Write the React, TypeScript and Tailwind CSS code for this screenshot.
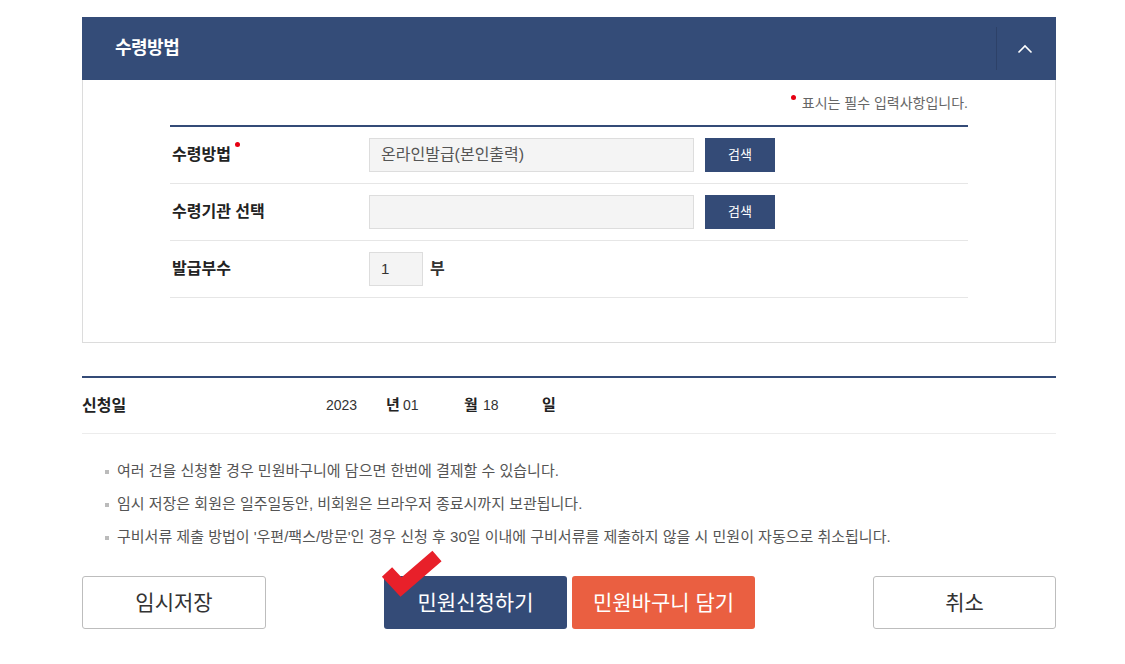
import React from 'react';

const font = { fontFamily: '"Liberation Sans", "Noto Sans CJK KR", sans-serif' };

const FieldRow = ({ label, required, children }: { label: string; required?: boolean; children: React.ReactNode }) => (
  <div className="flex h-[57px] items-center border-b border-[#e6e6e6]">
    <div className="relative w-[199px] pl-[2px] text-[16px] font-bold text-[#222]">
      <span className="relative">
        {label}
        {required && <span className="absolute -right-[9px] top-[-4px] h-[5px] w-[5px] rounded-full bg-[#e60012]" />}
      </span>
    </div>
    <div className="flex items-center">{children}</div>
  </div>
);

const SearchButton = () => (
  <button className="ml-[11px] h-[34px] w-[70px] bg-[#344b77] text-[13px] text-white">검색</button>
);

export default function App() {
  return (
    <div className="min-h-screen bg-white pt-[17px]" style={font}>
      <div className="ml-[82px] w-[974px]">
        {/* 수령방법 패널 */}
        <div className="flex h-[63px] items-center bg-[#344c78]">
          <h2 className="flex-1 pl-[33px] text-[18px] font-bold tracking-[-0.5px] text-white">수령방법</h2>
          <div className="flex h-[43px] w-[60px] items-center justify-center border-l border-[#2d4168] pr-[4px]">
            <svg width="16" height="10" viewBox="0 0 16 10" fill="none">
              <path d="M1.5 8.5 L8 2 L14.5 8.5" stroke="white" strokeWidth="1.6" />
            </svg>
          </div>
        </div>
        <div className="border border-t-0 border-[#dcdcdc] px-[87px] pb-[44px] pt-[13px]">
          <p className="flex h-[20px] items-center justify-end text-[14px] text-[#666]">
            <span className="relative mr-[6px] h-[5px] w-[5px] -translate-y-[6px] rounded-full bg-[#e60012]" />
            표시는 필수 입력사항입니다.
          </p>
          <div className="mt-[12px] border-t-2 border-[#344b77]">
            <FieldRow label="수령방법" required>
              <div className="flex h-[34px] w-[325px] items-center border border-[#dddddd] bg-[#f4f4f4] px-[11px] text-[16px] text-[#555]">
                온라인발급(본인출력)
              </div>
              <SearchButton />
            </FieldRow>
            <FieldRow label="수령기관 선택">
              <div className="h-[34px] w-[325px] border border-[#dddddd] bg-[#f4f4f4]" />
              <SearchButton />
            </FieldRow>
            <FieldRow label="발급부수">
              <div className="flex h-[34px] w-[54px] items-center border border-[#dddddd] bg-[#f4f4f4] px-[11px] text-[15px] text-[#333]">
                1
              </div>
              <span className="ml-[7px] text-[16px] font-bold text-[#333]">부</span>
            </FieldRow>
          </div>
        </div>

        {/* 신청일 */}
        <div className="mt-[33px] flex h-[58px] items-center border-b border-t-2 border-b-[#ececec] border-t-[#344b77] text-[#222]">
          <div className="w-[244px] text-[16px] font-bold">신청일</div>
          <span className="w-[60px] text-[14px] text-[#333]">2023</span>
          <span className="w-[16px] text-[15px] font-bold">년</span>
          <span className="w-[62px] pl-[1px] text-[14px] text-[#333]">01</span>
          <span className="w-[19px] text-[15px] font-bold">월</span>
          <span className="w-[59px] text-[14px] text-[#333]">18</span>
          <span className="text-[15px] font-bold">일</span>
        </div>

        {/* 안내 */}
        <ul className="pl-[23px] pt-[21px] text-[15px] text-[#555]">
          {[
            '여러 건을 신청할 경우 민원바구니에 담으면 한번에 결제할 수 있습니다.',
            '임시 저장은 회원은 일주일동안, 비회원은 브라우저 종료시까지 보관됩니다.',
            "구비서류 제출 방법이 '우편/팩스/방문'인 경우 신청 후 30일 이내에 구비서류를 제출하지 않을 시 민원이 자동으로 취소됩니다.",
          ].map((t) => (
            <li key={t} className="flex h-[33px] items-center">
              <span className="mr-[8px] h-[4px] w-[4px] bg-[#bbb]" />
              {t}
            </li>
          ))}
        </ul>

        {/* 버튼 */}
        <div className="mt-[22px] flex items-center justify-between">
          <button className="h-[53px] w-[184px] rounded-[3px] border border-[#bdbdbd] bg-white text-[21px] text-[#333]">
            임시저장
          </button>
          <div className="flex gap-[5px]">
            <div className="relative">
              <button className="h-[53px] w-[183px] rounded-[3px] bg-[#344b77] text-[21px] text-white">민원신청하기</button>
              <svg className="absolute left-[-3px] top-[-26px]" width="64" height="48" viewBox="0 0 64 48" fill="none">
                <path d="M6 22 L20 37 L56 6" stroke="#e8202a" strokeWidth="14" strokeLinejoin="miter" />
              </svg>
            </div>
            <button className="h-[53px] w-[183px] rounded-[3px] bg-[#ea5f41] text-[21px] text-white">민원바구니 담기</button>
          </div>
          <button className="h-[53px] w-[183px] rounded-[3px] border border-[#bdbdbd] bg-white text-[21px] text-[#333]">
            취소
          </button>
        </div>
      </div>
    </div>
  );
}
